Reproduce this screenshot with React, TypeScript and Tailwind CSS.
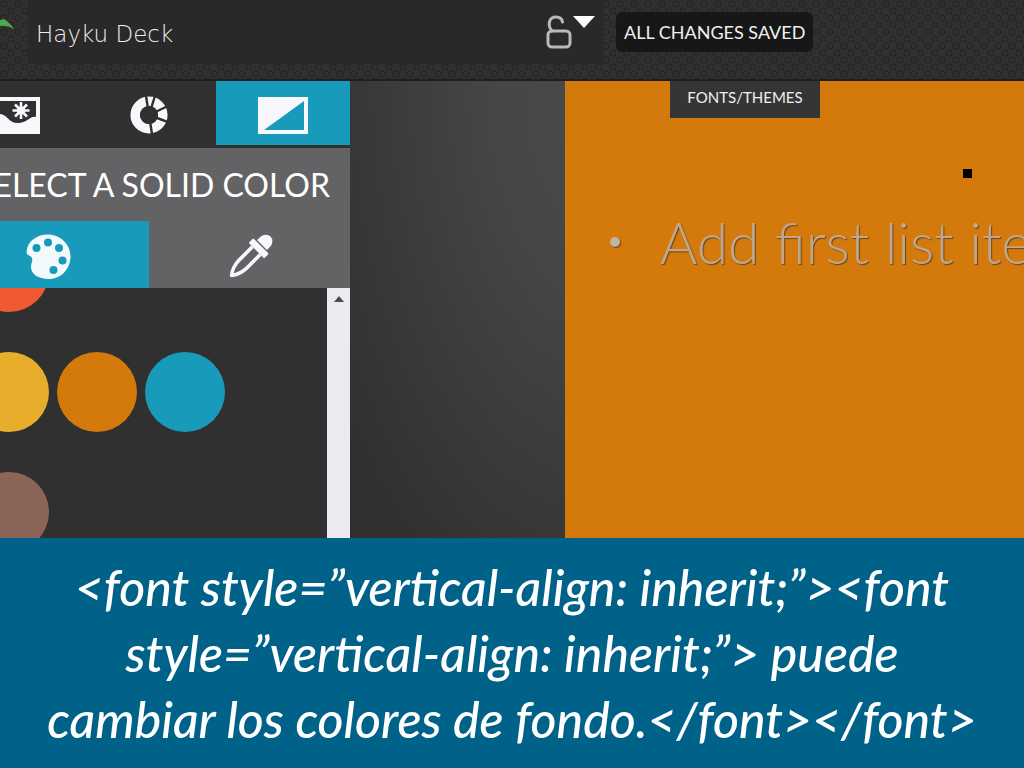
import type { ReactNode } from "react";

const swatchRows = [
  [{ name: "Red orange", color: "bg-[#f05a33]" }],
  [
    { name: "Yellow", color: "bg-[#e7ad2b]" },
    { name: "Orange", color: "bg-[#d4790c]" },
    { name: "Blue", color: "bg-[#189bbb]" },
  ],
  [{ name: "Brown", color: "bg-[#8a6558]" }],
];

const captionLines = [
  "<font style=”vertical-align: inherit;”><font",
  "style=”vertical-align: inherit;”> puede",
  "cambiar los colores de fondo.</font></font>",
];

function ImageIcon() {
  return (
    <svg width="50" height="37" viewBox="0 0 50 37" aria-hidden="true">
      <rect width="50" height="37" fill="#f8f8fc" />
      <path d="M4 4H46V20C41 18 38 25 29 26C19 27 17 17 10 17L4 20Z" fill="#303030" />
      <g stroke="#f8f8fc" strokeWidth="2.6">
        <path d="M31 5V22M22.5 13.500H39.500M25 7.500L37 19.500M37 7.500L25 19.500" />
      </g>
      <circle cx="31" cy="13.5" r="4" fill="#f8f8fc" />
    </svg>
  );
}

function ChartIcon() {
  return (
    <svg width="38" height="38" viewBox="0 0 38 38" aria-hidden="true">
      <circle cx="19" cy="19" r="13.8" fill="none" stroke="#f8f8fc" strokeWidth="9.5" />
      <path d="M19 19L16 0M19 19L25 0M19 19L38 10M19 19L38 26M19 19L22 38" stroke="#303030" strokeWidth="2.4" />
      <circle cx="19" cy="19" r="9" fill="#303030" />
    </svg>
  );
}

function SolidIcon() {
  return (
    <svg width="50" height="37" viewBox="0 0 50 37" aria-hidden="true">
      <rect width="50" height="37" fill="#f8f8fc" />
      <path d="M46 4V33H6Z" fill="#189bbb" />
    </svg>
  );
}

function PaletteIcon() {
  return (
    <svg width="45" height="45" viewBox="0 0 45 45" aria-hidden="true">
      <path d="M22 .500C34 .500 44.500 10 44.500 22.500S35 45 23 45C12 45 5 40 5 33C5 29 7 27 6 24C5 21 .500 22 .500 18C1 8 10 .500 22 .500Z" fill="#f2fafd" />
      <g fill="#189bbb">
        <circle cx="10.500" cy="14" r="4" />
        <circle cx="22" cy="8.500" r="4" />
        <circle cx="33" cy="14" r="4" />
        <circle cx="36.500" cy="26.500" r="4" />
        <circle cx="27.500" cy="36" r="4" />
      </g>
    </svg>
  );
}

function DropperIcon() {
  return (
    <svg width="46" height="46" viewBox="0 0 46 46" aria-hidden="true">
      <g transform="rotate(45 23 23)" fill="#f8f8fc">
        <path d="M16 6V2A7 8 0 0 1 30 2V6Z" />
        <rect x="12" y="7.500" width="22" height="6.500" rx="1" />
        <path d="M17.500 14V34Q18 43 23 49Q28 43 28.500 34V14" fill="none" stroke="#f8f8fc" strokeWidth="3.6" strokeLinejoin="round" />
      </g>
    </svg>
  );
}

function LockIcon() {
  return (
    <svg width="26" height="34" viewBox="0 0 26 34" fill="none" stroke="#b9b9b9" strokeWidth="3" strokeLinecap="round" aria-hidden="true">
      <rect x="2" y="16" width="22" height="16" rx="4" />
      <path d="M6 16C1 10 3 2 10 2C14 2 16 4 16.500 7" />
    </svg>
  );
}

function PanelTab({ label, active, size, children }: { label: string; active?: boolean; size: string; children: ReactNode }) {
  return (
    <button
      type="button"
      aria-label={label}
      aria-pressed={!!active}
      className={`flex flex-1 items-center justify-center ${size} ${active ? "bg-[#189bbb]" : ""}`}
    >
      {children}
    </button>
  );
}

function Header() {
  return (
    <header className="flex h-[81px] shrink-0 items-start border-b-2 border-[#1e1e1e] bg-[#303030] bg-[radial-gradient(circle_at_4px_4px,transparent_2px,#222222_3px,transparent_4px),radial-gradient(circle_at_11px_11px,transparent_2px,#222222_3px,transparent_4px)] bg-[size:14px_14px]">
      <div className="w-7 shrink-0 pt-[18px]">
        <svg width="14" height="12" viewBox="0 0 14 12" aria-hidden="true">
          <path d="M0 2L4 1Q9 4 14 11Q7 7 0 8Z" fill="#4ca94c" />
        </svg>
      </div>
      <div className="flex h-16 w-[576px] shrink-0 items-center bg-[#292929] pl-2">
        <input
          aria-label="Deck title"
          defaultValue="Hayku Deck"
          className="min-w-0 flex-1 bg-transparent pt-1 font-['DejaVu_Sans',sans-serif] text-[23px] font-extralight text-[#eeeeee] outline-none"
        />
        <button type="button" aria-label="Privacy" className="flex items-start pr-2">
          <LockIcon />
          <svg width="24" height="14" viewBox="0 0 24 14" aria-hidden="true">
            <path d="M1 1H23L12 13Z" fill="#ffffff" />
          </svg>
        </button>
      </div>
      <p className="mt-3 ml-3 flex h-10 items-center rounded-md bg-[#171717] px-2 font-['Lato',sans-serif] text-[18px] whitespace-nowrap text-[#f0f0f0]">
        ALL CHANGES SAVED
      </p>
    </header>
  );
}

function ColorPanel() {
  return (
    <aside className="flex w-[350px] shrink-0 justify-end overflow-hidden bg-[#303030]">
      <div className="flex w-[402px] shrink-0 flex-col">
        <nav aria-label="Background type" className="flex pb-[3px]">
          <PanelTab label="Image" size="h-16 pt-1"><ImageIcon /></PanelTab>
          <PanelTab label="Chart" size="h-16 pt-1"><ChartIcon /></PanelTab>
          <PanelTab label="Solid color" size="h-16 pt-1" active><SolidIcon /></PanelTab>
        </nav>
        <div className="bg-[#636365]">
          <h2 className="pr-5 text-right font-['Lato',sans-serif] text-[32px] leading-[73px] whitespace-nowrap text-white">
            SELECT A SOLID COLOR
          </h2>
          <div className="flex">
            <PanelTab label="Palette" size="h-[67px] pt-1" active><PaletteIcon /></PanelTab>
            <PanelTab label="Pick a color" size="h-[67px] pt-1"><DropperIcon /></PanelTab>
          </div>
        </div>
        <div className="flex min-h-0 flex-1 overflow-hidden">
          <div className="-mt-14 flex flex-1 flex-col gap-10 pl-[21px]">
            {swatchRows.map((row) => (
              <div key={row[0].name} className="flex gap-2">
                {row.map((s) => (
                  <button key={s.name} type="button" aria-label={s.name} className={`size-20 shrink-0 rounded-full ${s.color}`} />
                ))}
              </div>
            ))}
          </div>
          <div className="flex w-[23px] items-start justify-center bg-[#ebeaef] pt-2">
            <button type="button" aria-label="Scroll up">
              <svg width="10" height="6" viewBox="0 0 10 6" className="block" aria-hidden="true">
                <path d="M0 6L5 0L10 6Z" fill="#4a4a4d" />
              </svg>
            </button>
          </div>
        </div>
      </div>
    </aside>
  );
}

function Slide() {
  return (
    <section className="min-w-0 flex-1 overflow-hidden bg-[#d4790c]">
      <button type="button" className="ml-[105px] block h-[37px] w-[150px] bg-[#353535] pb-1 font-['Lato',sans-serif] text-[15px] text-[#f0f0f0]">
        FONTS/THEMES
      </button>
      <div className="flex justify-end pt-[51px] pr-[52px]">
        <span className="size-[9px] bg-black" />
      </div>
      <ul className="pt-7 pl-[45px]">
        <li className="flex items-center gap-10 font-['Lato',sans-serif] text-[57px] leading-[72px] font-light whitespace-nowrap text-[#c0a78c] [text-shadow:1px_1px_1px_#6b4618]">
          <span className="size-2.5 shrink-0 rounded-full bg-[#c0b4a4] shadow-[1px_1px_1px_#6b4618]" />
          Add first list item
        </li>
      </ul>
    </section>
  );
}

export default function App() {
  return (
    <div className="flex h-screen flex-col overflow-hidden">
      <Header />
      <main className="flex min-h-0 flex-1 bg-[#303030]">
        <ColorPanel />
        <div className="w-[215px] shrink-0 bg-[radial-gradient(ellipse_150%_130%_at_120%_0%,#4a4a4c_0%,#464648_35%,#303030_100%)]" />
        <Slide />
      </main>
      <footer className="shrink-0 bg-[#006288] py-4 text-center font-['Lato',sans-serif] text-[50px] leading-[66px] font-medium whitespace-nowrap text-white italic">
        <p>
          {captionLines.map((line) => (
            <span key={line} className="block">{line}</span>
          ))}
        </p>
      </footer>
    </div>
  );
}
